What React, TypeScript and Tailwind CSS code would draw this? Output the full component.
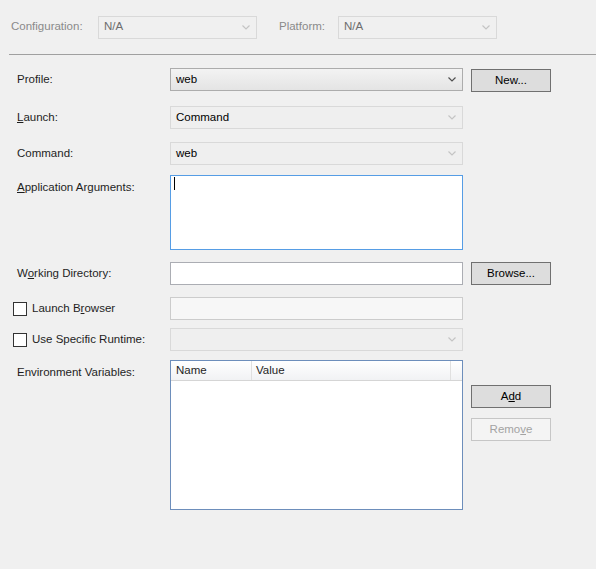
import React from 'react';

function Chevron({ disabled }: { disabled?: boolean }) {
  return (
    <svg width="8" height="5" viewBox="0 0 8 5" className="shrink-0">
      <path
        d="M0.5 0.5 L4 4 L7.5 0.5"
        fill="none"
        stroke={disabled ? '#c4c4c4' : '#505050'}
        strokeWidth="1.2"
      />
    </svg>
  );
}

function Combo({ value, disabled, width = 'w-[293px]' }: { value?: string; disabled?: boolean; width?: string }) {
  return (
    <div
      className={
        'flex h-[23px] items-center justify-between border pl-[5px] pr-[6px] ' +
        width +
        ' ' +
        (disabled
          ? 'border-[#d9d9d9] bg-[#efefef]'
          : 'border-[#acacac] bg-gradient-to-b from-[#f3f3f3] to-[#e4e4e4]')
      }
    >
      <span className="text-black">{value}</span>
      <Chevron disabled={disabled} />
    </div>
  );
}

function Btn({ children, disabled }: { children: React.ReactNode; disabled?: boolean }) {
  return (
    <div
      className={
        'flex h-[23px] w-[80px] items-center justify-center border ' +
        (disabled ? 'border-[#c6c6c6] bg-[#f4f4f4] text-[#a3a3a3]' : 'border-[#707070] bg-[#dddddd] text-black')
      }
    >
      {children}
    </div>
  );
}

function Check() {
  return <div className="h-[14px] w-[14px] border border-[#333333] bg-white" />;
}

export default function App() {
  return (
    <div
      className="h-[569px] w-[596px] overflow-hidden bg-[#f0f0f0] text-[11.5px] text-[#1e1e1e]"
      style={{ fontFamily: '"Liberation Sans", Arial, sans-serif' }}
    >
      {/* top bar */}
      <div className="flex h-[54px] items-center pl-[11px] text-[#8a8a8a]">
        <span className="w-[87px]">Configuration:</span>
        <div className="flex h-[23px] w-[159px] items-center justify-between border border-[#d9d9d9] pl-[5px] pr-[6px]">
          <span className="text-[#6d6d6d]">N/A</span>
          <Chevron disabled />
        </div>
        <span className="ml-[22px] w-[59px]">Platform:</span>
        <div className="flex h-[23px] w-[159px] items-center justify-between border border-[#d9d9d9] pl-[5px] pr-[6px]">
          <span className="text-[#6d6d6d]">N/A</span>
          <Chevron disabled />
        </div>
      </div>
      <div className="ml-[9px] h-px bg-[#a0a0a0]" />

      <div className="flex flex-col pl-[17px] pt-[12px]">
        {/* Profile */}
        <div className="flex items-center">
          <span className="w-[153px]">Profile:</span>
          <Combo value="web" />
          <div className="ml-[8px] mt-[2px]">
            <Btn>New...</Btn>
          </div>
        </div>

        {/* Launch */}
        <div className="mt-[14px] flex items-center">
          <span className="w-[153px]">
            <u>L</u>aunch:
          </span>
          <Combo value="Command" disabled />
        </div>

        {/* Command */}
        <div className="mt-[13px] flex items-center">
          <span className="w-[153px]">Command:</span>
          <Combo value="web" disabled />
        </div>

        {/* Arguments */}
        <div className="mt-[10px] flex items-start">
          <span className="mt-[4px] w-[153px]">
            <u>A</u>pplication Arguments:
          </span>
          <div className="h-[75px] w-[293px] border border-[#569de5] bg-white pl-[3px] pt-[1px]">
            <div className="h-[13px] w-px bg-black" />
          </div>
        </div>

        {/* Working dir */}
        <div className="mt-[12px] flex items-center">
          <span className="w-[153px]">
            W<u>o</u>rking Directory:
          </span>
          <div className="h-[23px] w-[293px] border border-[#abadb3] bg-white" />
          <div className="ml-[8px]">
            <Btn>Browse...</Btn>
          </div>
        </div>

        {/* Launch browser */}
        <div className="mt-[12px] flex items-center">
          <div className="-ml-[4px] flex w-[157px] items-center gap-[5px]">
            <Check />
            <span>
              Launch B<u>r</u>owser
            </span>
          </div>
          <div className="h-[23px] w-[293px] border border-[#cccccc] bg-[#f7f7f7]" />
        </div>

        {/* Runtime */}
        <div className="mt-[8px] flex items-center">
          <div className="-ml-[4px] flex w-[157px] items-center gap-[5px]">
            <Check />
            <span>Use Specific Runtime:</span>
          </div>
          <Combo disabled />
        </div>

        {/* Env vars */}
        <div className="mt-[9px] flex items-start">
          <span className="mt-[4px] w-[153px]">Environment Variables:</span>
          <div className="flex h-[150px] w-[293px] flex-col border border-[#6d8ebb] bg-white">
            <div className="flex h-[20px] items-center border-b border-[#d5d5d5] bg-gradient-to-b from-white to-[#f1f2f4]">
              <span className="flex h-full w-[81px] items-center border-r border-[#e0e0e0] pl-[5px]">Name</span>
              <span className="flex h-full w-[199px] items-center border-r border-[#e0e0e0] pl-[4px]">Value</span>
            </div>
          </div>
          <div className="ml-[8px] mt-[25px] flex flex-col gap-[10px]">
            <Btn>
              A<u>d</u>d
            </Btn>
            <Btn disabled>
              Remo<u>v</u>e
            </Btn>
          </div>
        </div>
      </div>
    </div>
  );
}
